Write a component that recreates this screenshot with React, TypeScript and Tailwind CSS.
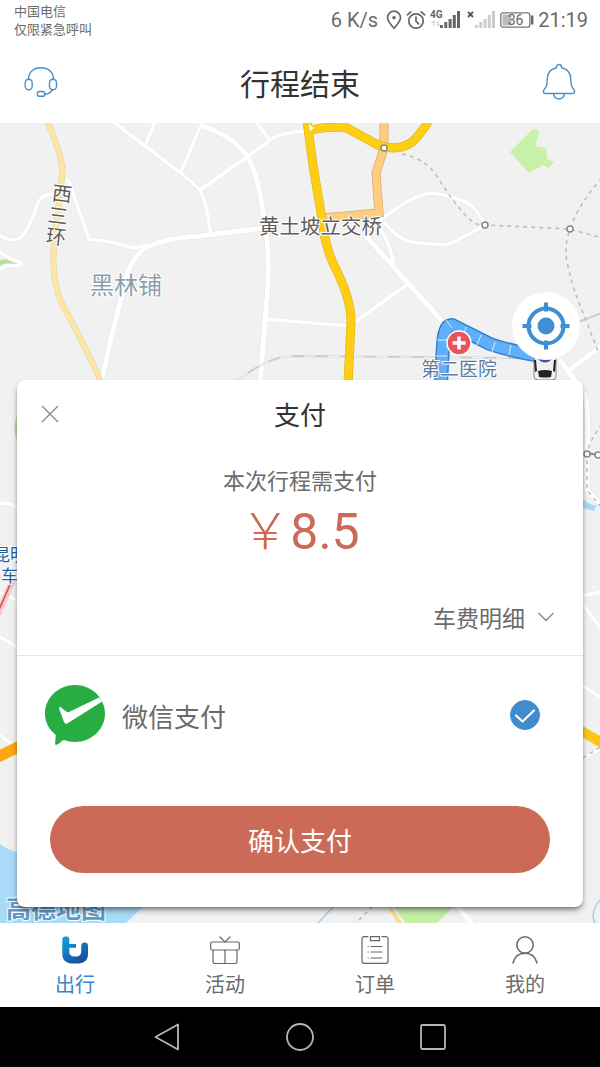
import { useState } from "react"
import clsx from "clsx"

function HeadsetIcon() {
  return (
    <svg viewBox="0 0 34 32" className="h-8 w-[34px]" fill="none" stroke="#4a90c4" strokeWidth="1.4" strokeLinecap="round">
      <path d="M4.5 13.5C4.5 5.8 10 1.8 17 1.8s12.500 4 12.500 11.700" />
      <rect x="1.200" y="13.200" width="7" height="10.600" rx="3.500" />
      <rect x="25.500" y="13.200" width="7" height="10.600" rx="3.500" />
      <path d="M28 23.800c-1 2.800-3.200 4.200-7 4.500" />
      <rect x="13.300" y="25.500" width="7.600" height="4.800" rx="2.400" />
    </svg>
  )
}

function BellIcon() {
  return (
    <svg viewBox="0 0 34 38" className="h-[38px] w-[34px]" fill="none" stroke="#4a90c4" strokeWidth="1.4" strokeLinejoin="round">
      <path d="M14.500 4.800V4a2.500 2.500 0 0 1 5 0v.8c5.800 1.200 9.300 5.600 9.300 11.700 0 5 .6 7.700 2.800 9.700 1.900 1.700 1.200 4.300-1.200 4.300H3.600c-2.400 0-3.100-2.600-1.200-4.300 2.200-2 2.800-4.700 2.800-9.700 0-6.100 3.500-10.500 9.300-11.700Z" />
      <path d="M11.500 30.500a5.500 5.500 0 0 0 11 0" />
    </svg>
  )
}

function PinIcon() {
  return (
    <svg viewBox="0 0 16 20" className="h-5 w-4" fill="none" stroke="#666" strokeWidth="1.700">
      <path d="M8 18.300C4 13.800 1.500 10.800 1.500 7.700a6.500 6.500 0 0 1 13 0c0 3.100-2.500 6.100-6.500 10.600Z" />
      <circle cx="8" cy="7.700" r="1.800" fill="#666" stroke="none" />
    </svg>
  )
}

function AlarmIcon() {
  return (
    <svg viewBox="0 0 20 20" className="size-5" fill="none" stroke="#666" strokeWidth="1.700" strokeLinecap="round">
      <circle cx="10" cy="11" r="7.200" />
      <path d="M10 7v4.200l2.600 2.600M1.300 4.800 4.800 1.800M18.700 4.800l-3.500-3" />
    </svg>
  )
}

function SignalIcon({ dim }: { dim?: boolean }) {
  return (
    <svg viewBox="0 0 31 22" className="h-[22px] w-[31px]" fill={dim ? "#ccc" : "#666"}>
      {dim ? (
        <path d="m3 3 5 5m0-5L3 8" stroke="#555" strokeWidth="1.800" />
      ) : (
        <>
          <text x="0" y="9" fontSize="10" fontWeight="700" fontFamily="Roboto, sans-serif">4G</text>
          <path d="M3.500 17v-5m-2 2 2-2 2 2M8 12v5m-2-2 2 2 2-2" stroke="#ccc" strokeWidth="1" fill="none" />
        </>
      )}
      <path d="M10 16h3v3h-3zM14.300 13h3v6h-3zM18.600 10h3v9h-3zM22.800 6h3v13h-3zM27 2h3v17h-3z" />
    </svg>
  )
}

function BatteryIcon() {
  return (
    <svg viewBox="0 0 34 16" className="h-4 w-[34px]">
      <rect x="0.800" y="0.800" width="29" height="14.400" rx="2" fill="none" stroke="#777" strokeWidth="1.300" />
      <path d="M2.500 2.500h9v11h-9z" fill="#bbb" />
      <path d="M31 3.500h2.400v9H31z" fill="#666" />
      <text x="15.500" y="13" textAnchor="middle" fontSize="14" fontFamily="Roboto, sans-serif" fill="#666">36</text>
    </svg>
  )
}

function LocateIcon() {
  return (
    <svg viewBox="0 0 48 48" className="size-12" fill="none" stroke="#3f8fd2" strokeWidth="4">
      <circle cx="24" cy="24" r="17.500" />
      <circle cx="24" cy="24" r="8.500" fill="#3f8fd2" stroke="none" />
      <path d="M24 0.500v9M24 38.500v9M0.500 24h9M38.500 24h9" />
    </svg>
  )
}

function WechatPayIcon() {
  return (
    <svg viewBox="0 0 60 60" className="size-[60px]">
      <path d="M30 0c16.600 0 30 12.800 30 28.500S46.600 57 30 57c-4 0-7.800-.6-11.200-1.900C16 56.500 13 60 11 60c-1.500 0-.4-4.500-.2-10C4 44.500 0 37.200 0 28.500 0 12.800 13.400 0 30 0Z" fill="#27ad42" />
      <path d="M54 12.500 24.500 26.700c-1.200.6-2.400.4-3.400-.3l-5-4c-1.200-1-2.500 0-2 1.400L19 37c.6 1.700 2.200 2.200 3.700 1.200L57.500 16.200Z" fill="#fff" />
    </svg>
  )
}

function TripIcon() {
  return (
    <svg viewBox="0 0 28 28" className="size-7">
      <defs>
        <linearGradient id="trip" x1="0" y1="0" x2="0.600" y2="1">
          <stop offset="0" stopColor="#0fa8e0" />
          <stop offset="1" stopColor="#17509a" />
        </linearGradient>
      </defs>
      <path d="M1.300 3.500a3 3 0 0 1 3-3h1.500a2.500 2.500 0 0 1 2.500 2.500V8H15v3.800H8.300v3.700c0 3.200 2 5 4.900 5h2c3 0 5-1.800 5-5V10a3.400 3.400 0 0 1 6.800 0v8c0 6-4 9.500-9.500 9.500h-6.500c-5.700 0-9.700-3.500-9.700-9.500Z" fill="url(#trip)" />
    </svg>
  )
}

function GiftIcon() {
  return (
    <svg viewBox="0 0 30 28" className="h-7 w-[30px]" fill="none" stroke="#666" strokeWidth="1.200" strokeLinecap="round">
      <rect x="0.700" y="6" width="28.600" height="8" rx="1.500" />
      <path d="M3 14v11.500a2 2 0 0 0 2 2h20a2 2 0 0 0 2-2V14M15 14v13.500M10 1l5 5 5-5" />
    </svg>
  )
}

function OrderIcon() {
  return (
    <svg viewBox="0 0 28 28" className="size-7" fill="none" stroke="#666" strokeWidth="1.200" strokeLinecap="round">
      <path d="M7 .7H3a2 2 0 0 0-2 2v22.600a2 2 0 0 0 2 2h22a2 2 0 0 0 2-2V2.700a2 2 0 0 0-2-2h-4" />
      <path d="M9.500.7h9v4h-9zM10 10.500h11M10 16h11M10 22h11M7 10.500h.3M7 16h.3M7 22h.3" />
    </svg>
  )
}

function UserIcon() {
  return (
    <svg viewBox="0 0 28 28" className="size-7" fill="none" stroke="#666" strokeWidth="1.500" strokeLinecap="round">
      <circle cx="14" cy="9" r="8.200" />
      <path d="M2 27c1.500-6 6-9.800 12-9.800S24.500 21 26 27" />
    </svg>
  )
}

function StationDot({ cx, cy }: { cx: number; cy: number }) {
  return <circle cx={cx} cy={cy} r="3" fill="#fff" stroke="#888" strokeWidth="1.500" />
}

const minorRoads = [
  "M112 121 145 146 181 173 200 190Q205 200 207 212L211 235",
  "M155 121 145 146",
  "M200 127 181 172",
  "M200 190 247 157 270 140Q280 133 304 131",
  "M255 121 270 140",
  "M66 180Q70 180 72 190L89 239 110 242 134 248 147 245",
  "M0 235Q9 243 20 238Q29 230 38 203Q42 193 55 194",
  "M0 252Q8 259 20 262Q24 266 12 266Q4 264 0 270",
  "M267 319 300 322 350 326",
  "M379 221Q415 193 432 193Q450 195 468 203Q480 213 485 225",
  "M384 222Q400 243 420 243L445 245Q455 242 485 225",
  "M380 228Q392 248 394 268",
  "M353 323 407 285",
  "M0 503Q10 503 17 507",
  "M0 592 20 602M0 637 20 649M0 735 16 748",
  "M580 596 602 592M580 600 602 630M580 684 602 698M583 758 602 748",
]

const majorRoads = [
  "M200 125Q235 137 247 156Q258 175 262 205L267 240Q270 270 266 310L260 384",
  "M101 384Q110 340 122 295Q127 262 145 248Q165 238 200 236L264 228",
  "M365 235 442 321",
  "M602 346 568 371M560 360 585 395Q589 410 587 453L587 490 602 506",
  "M452 900 474 926",
]

function CityMap() {
  return (
    <svg
      viewBox="0 123 600 800"
      preserveAspectRatio="xMidYMin slice"
      className="absolute inset-0 size-full"
      fontFamily="'Noto Sans CJK SC', sans-serif"
      fontWeight="400"
      fill="none"
      aria-hidden="true"
    >
      <rect y="123" width="600" height="800" fill="#f1f1f1" />

      {/* parks and water */}
      <path d="M510 152 531 131Q536 126 539 132L535 146 546 148 547 159 554 162 549 168 543 165 529 173Z" fill="#c9f0a8" />
      <path d="M0 260 8 259 18 264 0 266Z" fill="#b9dfa0" />
      <path d="M17 415Q12 430 17 440Z" fill="#b9dfa0" />
      <path d="M0 844Q8 850 17 852L150 900 126 923H0Z" fill="#a9dbf8" />
      <path d="M390 900H460L437 923H405Z" fill="#c6efa6" />
      <path d="M583 499Q590 506 597 505L594 511 583 508Z" fill="#a9d8f0" />
      <path d="M334 906 318 923M602 898Q588 912 596 925" stroke="#a5cfe8" strokeWidth="1.500" />

      {/* roads: casing first, then the surface */}
      <g stroke="#e8e8ea">
        {minorRoads.map((d) => <path key={d} d={d} strokeWidth="4.500" />)}
        {majorRoads.map((d) => <path key={d} d={d} strokeWidth="6.500" />)}
      </g>
      <g stroke="#fff">
        {minorRoads.map((d) => <path key={d} d={d} strokeWidth="3.500" />)}
        {majorRoads.map((d) => <path key={d} d={d} strokeWidth="5" />)}
      </g>

      {/* railway */}
      <path d="M238 380Q268 357 292 356L420 357 520 358M578 322 602 313" stroke="#ccc" strokeWidth="2" />
      <path d="M238 380Q268 357 292 356L420 357 520 358" stroke="#f1f1f1" strokeWidth="1.300" strokeDasharray="12 12" />

      {/* west ring road */}
      <path d="M47 121Q62 155 62.500 172L54 245Q51 280 62 304Q85 345 102 384" stroke="#e3d3a0" strokeWidth="6" />
      <path d="M47 121Q62 155 62.500 172L54 245Q51 280 62 304Q85 345 102 384" stroke="#fde6a4" strokeWidth="5" />

      {/* expressways */}
      <path d="M384 121V148L376 173 379 213 322 218" stroke="#e0ab62" strokeWidth="9" />
      <path d="M384 121V148L376 173 379 213 322 218" stroke="#fccd82" strokeWidth="7.500" />
      <g strokeLinejoin="round">
        <path d="M307 121 313 165 323 225Q325 245 333 263Q352 300 351 323L348 384M309 131Q318 127 345 127L378 145Q398 152 412 142Q420 135 430 119" stroke="#dfae1c" strokeWidth="9" />
        <path d="M307 121 313 165 323 225Q325 245 333 263Q352 300 351 323L348 384M309 131Q318 127 345 127L378 145Q398 152 412 142Q420 135 430 119" stroke="#fdce14" strokeWidth="8" />
      </g>
      <path d="M309 124 314 128 310 131Z" fill="#fff" />
      <path d="M388 905 402 926" stroke="#fbdc96" strokeWidth="4" />
      <path d="M-2 757 20 746" stroke="#fba60f" strokeWidth="11" />
      <path d="M578 729 602 743" stroke="#fcc414" strokeWidth="10" />
      <path d="M14 578-2 614" stroke="#f3c8c8" strokeWidth="6" />
      <path d="M12 580-2 612" stroke="#d84a55" strokeWidth="1.500" />

      {/* metro lines */}
      <g stroke="#bbb" strokeWidth="1.500" strokeDasharray="4 4">
        <path d="M402 154Q426 159 436 175Q455 205 468 218Q476 226 485 225L570 229 602 238" />
        <path d="M602 178Q578 205 570 229Q564 245 567 262Q572 285 578 300L598 351" />
        <path d="M602 424Q590 440 587 453V490L600 506M373 906 354 925M583 758 602 746" />
      </g>
      <path d="M587 453 598 455" stroke="#b9795a" strokeWidth="2" />
      <StationDot cx={384} cy={148} />
      <StationDot cx={485} cy={225} />
      <StationDot cx={570} cy={229} />
      <StationDot cx={587} cy={454} />
      <StationDot cx={598} cy={455} />

      {/* driven route */}
      <g strokeLinejoin="round">
        <path d="M441 384 443 345Q444 325 452 325L490 344Q510 351 545 357" stroke="#2f80cf" strokeWidth="14" />
        <path d="M441 384 443 345Q444 325 452 325L490 344Q510 351 545 357" stroke="#5fb0f8" strokeWidth="11" />
        <path d="M436 356H447M437 340H448M446 320 452 328M466 327 463 337M481 335 477 345M495 342 492 352M511 345 509 355" stroke="#d6edff" strokeWidth="1" />
      </g>

      {/* car */}
      <rect x="534" y="356" width="22" height="24" rx="4" fill="#f0f0ec" stroke="#888" strokeWidth="1" />
      <path d="M534 360H536L537 371 535 372ZM556 360H554L553 371 555 372Z" fill="#222" />
      <path d="M538 371Q545 369 552 371L551 377Q545 378 539 377Z" fill="#222" />
      <path d="M537 358Q545 367 553 358Z" fill="#3b50c8" />

      {/* hospital */}
      <circle cx="459" cy="343" r="12" fill="#ea5358" stroke="#fff" strokeWidth="1.500" />
      <path d="M459 336.500V349.500M452.500 343H465.500" stroke="#fff" strokeWidth="3.500" />

      {/* labels */}
      <g stroke="#fff" strokeWidth="2" strokeLinejoin="round" paintOrder="stroke">
        <g fill="#5c5c5c" fontSize="20">
          <text x="259" y="234" fontSize="20.500">黄土坡立交桥</text>
          <text x="52" y="201" transform="rotate(7 62 194)">西</text>
          <text x="48" y="223" transform="rotate(7 58 216)">三</text>
          <text x="46" y="244" transform="rotate(7 56 237)">环</text>
        </g>
        <text x="90" y="294" fontSize="24" fill="#8a9fae">黑林铺</text>
        <text x="421" y="376" fontSize="19" fill="#5d7b9d">第二医院</text>
        <text x="-7" y="561" fontSize="17" fill="#1d5fa0">昆明</text>
        <text x="1" y="582" fontSize="17" fill="#1d5fa0">车站</text>
        <text x="6" y="918" fontSize="25" fontWeight="700" fill="#5b9bcb">高德地图</text>
      </g>
    </svg>
  )
}

const tabs = [
  { label: "出行", icon: TripIcon },
  { label: "活动", icon: GiftIcon },
  { label: "订单", icon: OrderIcon },
  { label: "我的", icon: UserIcon },
]

export default function App() {
  const [method, setMethod] = useState("wechat")

  return (
    <div className="flex min-h-screen flex-col bg-white font-['Noto_Sans_CJK_SC',sans-serif] font-normal text-[#6b6b6b]">
      {/* Status bar */}
      <div className="flex h-10 items-center justify-between pr-3 pl-[14px]">
        <div className="text-[13px] leading-[18px]">
          <p>中国电信</p>
          <p>仅限紧急呼叫</p>
        </div>
        <div className="flex items-center gap-1 font-[Roboto,sans-serif] text-xl">
          <span className="pr-1">6 K/s</span>
          <PinIcon />
          <AlarmIcon />
          <SignalIcon />
          <SignalIcon dim />
          <BatteryIcon />
          <time>21:19</time>
        </div>
      </div>

      {/* Title bar */}
      <header className="flex h-[83px] items-center justify-between px-6">
        <button type="button" aria-label="客服"><HeadsetIcon /></button>
        <h1 className="text-3xl text-[#333]">行程结束</h1>
        <button type="button" aria-label="消息"><BellIcon /></button>
      </header>

      <main className="relative flex grow flex-col">
        <CityMap />

        <div className="relative flex h-[257px] items-end justify-end p-5">
          <button type="button" aria-label="定位" className="flex size-[68px] items-center justify-center rounded-full bg-white">
            <LocateIcon />
          </button>
        </div>

        {/* Payment card */}
        <section className="relative mx-[17px] mb-4 rounded-lg bg-white shadow-md shadow-black/40">
          <div className="grid h-[67px] grid-cols-3 items-center px-6">
            <button type="button" aria-label="关闭" className="justify-self-start">
              <svg viewBox="0 0 18 18" className="size-[18px]" fill="none" stroke="#888" strokeWidth="1.300">
                <path d="m1 1 16 16M17 1 1 17" />
              </svg>
            </button>
            <h2 className="text-center text-[26px] text-[#333]">支付</h2>
          </div>

          <div className="pt-4 text-center">
            <p className="text-[22px] leading-8">本次行程需支付</p>
            <p className="h-16 text-[50px] leading-16 text-[#cb6b57]">
              <span className="font-light">￥</span>
              <span className="font-[Roboto,sans-serif]">8.5</span>
            </p>
          </div>

          <div className="flex h-[97px] items-end justify-end border-b border-[#e5e5e5] px-7 pb-[22px]">
            <button type="button" className="flex items-center gap-3 text-[23px] leading-8">
              车费明细
              <svg viewBox="0 0 18 10" className="h-[10px] w-[18px]" fill="none" stroke="#888" strokeWidth="1.400">
                <path d="m1.500 1 7.500 7.500L16.500 1" />
              </svg>
            </button>
          </div>

          <label className="flex h-[118px] items-center gap-[17px] pr-[43px] pl-7">
            <WechatPayIcon />
            <span className="grow text-[26px]">微信支付</span>
            <span className="grid size-[30px] place-items-center">
              <input
                type="radio"
                name="method"
                value="wechat"
                checked={method === "wechat"}
                onChange={(e) => setMethod(e.target.value)}
                className="col-start-1 row-start-1 size-[30px] appearance-none rounded-full border border-gray-300 checked:border-[#3f8dcf] checked:bg-[#3f8dcf]"
              />
              <svg viewBox="0 0 30 30" className="pointer-events-none col-start-1 row-start-1 size-[30px]" fill="none" stroke="#fff" strokeWidth="2.200" strokeLinecap="round" strokeLinejoin="round">
                <path d="m6 15.500 6.500 6L24 10.500" />
              </svg>
            </span>
          </label>

          <div className="px-[33px] pt-8 pb-[34px]">
            <button type="button" className="h-[67px] w-full rounded-full bg-[#cb6b57] text-[26px] text-white">
              确认支付
            </button>
          </div>
        </section>
      </main>

      <nav className="grid h-[84px] grid-cols-4 bg-white">
        {tabs.map(({ label, icon: Icon }, i) => (
          <a
            key={label}
            href="#"
            className={clsx("flex flex-col items-center gap-1 pt-[13px] text-xl leading-8", i === 0 && "text-[#3a86c8]")}
          >
            <Icon />
            {label}
          </a>
        ))}
      </nav>

      {/* System navigation */}
      <div className="flex h-[60px] items-center justify-center gap-[105px] bg-black">
        <button type="button" aria-label="返回">
          <svg viewBox="0 0 28 28" className="size-7" fill="none" stroke="#b5b5b5" strokeWidth="1.800" strokeLinejoin="round">
            <path d="M25 1.500v25L2.500 14Z" />
          </svg>
        </button>
        <button type="button" aria-label="主页">
          <svg viewBox="0 0 28 28" className="size-7" fill="none" stroke="#b5b5b5" strokeWidth="1.800">
            <circle cx="14" cy="14" r="13" />
          </svg>
        </button>
        <button type="button" aria-label="最近任务">
          <svg viewBox="0 0 28 28" className="size-7" fill="none" stroke="#b5b5b5" strokeWidth="1.800">
            <rect x="2" y="2" width="24" height="24" rx="1.500" />
          </svg>
        </button>
      </div>
    </div>
  )
}
